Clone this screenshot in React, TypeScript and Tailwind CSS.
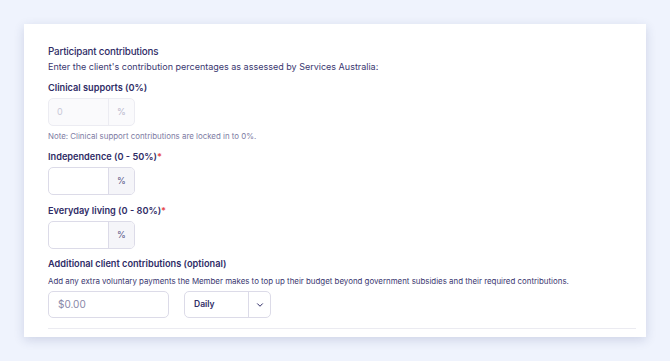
import { ChevronDown } from 'lucide-react'

function PercentInput({ disabled, value }: { disabled?: boolean; value?: string }) {
  return (
    <div
      className={`flex h-[28px] w-[87px] overflow-hidden rounded-[5px] border ${
        disabled ? 'border-[#ececf2] bg-[#fafafc]' : 'border-[#dcdbe8] bg-white'
      }`}
    >
      <div className="flex w-[59px] items-center px-[8px] text-[9px] text-[#c9c8d8]">{value}</div>
      <div
        className={`flex flex-1 items-center justify-center border-l text-[9px] ${
          disabled ? 'border-[#ececf2] text-[#b9b8cc]' : 'border-[#dcdbe8] bg-[#f5f5f9] text-[#5a5788]'
        }`}
      >
        %
      </div>
    </div>
  )
}

function Label({ children, required }: { children: React.ReactNode; required?: boolean }) {
  return (
    <div className="text-[9.2px] font-semibold leading-[14px] text-[#2f2c66]">
      {children}
      {required && <span className="text-[#e5484d]">*</span>}
    </div>
  )
}

export default function App() {
  return (
    <div className="min-h-[361px] bg-[#eff3fd] px-[24px] pt-[24px] font-['Inter',sans-serif]">
      <div className="h-[313px] bg-white px-[24px] pt-[20px] pb-[10px] shadow-[0_3px_10px_rgba(40,50,110,0.16)]">
        <div className="text-[9.8px] font-medium leading-[16px] tracking-[-0.2px] text-[#2f2c66]">
          Participant contributions
        </div>
        <div className="text-[9px] leading-[14px] text-[#3a3770]">
          Enter the client's contribution percentages as assessed by Services Australia:
        </div>

        <div className="mt-[7px]">
          <Label>Clinical supports (0%)</Label>
        </div>
        <div className="mt-[3px]">
          <PercentInput disabled value="0" />
        </div>
        <div className="mt-[4px] text-[7.9px] leading-[12px] text-[#7d7ba3]">
          Note: Clinical support contributions are locked in to 0%.
        </div>

        <div className="mt-[8px]">
          <Label required>Independence (0 - 50%)</Label>
        </div>
        <div className="mt-[3px]">
          <PercentInput />
        </div>

        <div className="mt-[9px]">
          <Label required>Everyday living (0 - 80%)</Label>
        </div>
        <div className="mt-[3px]">
          <PercentInput />
        </div>

        <div className="mt-[8px]">
          <Label>Additional client contributions (optional)</Label>
        </div>
        <div className="mt-[4px] text-[7.9px] leading-[12px] text-[#3a3770]">
          Add any extra voluntary payments the Member makes to top up their budget beyond government subsidies and their required contributions.
        </div>

        <div className="mt-[4px] flex gap-[15px]">
          <div className="flex h-[27px] w-[121px] items-center rounded-[5px] border border-[#dcdbe8] px-[9px] text-[10px] text-[#8a88a8]">
            $0.00
          </div>
          <div className="flex h-[27px] w-[87px] overflow-hidden rounded-[5px] border border-[#dcdbe8]">
            <div className="flex w-[63px] items-center px-[9px] text-[8.5px] font-semibold text-[#2f2c66]">Daily</div>
            <div className="flex flex-1 items-center justify-center border-l border-[#dcdbe8] text-[#2f2c66]">
              <ChevronDown size={10} strokeWidth={2.4} />
            </div>
          </div>
        </div>

        <div className="mt-[10px] mr-[-14px] h-px bg-[#ebebf1]" />
      </div>
    </div>
  )
}
